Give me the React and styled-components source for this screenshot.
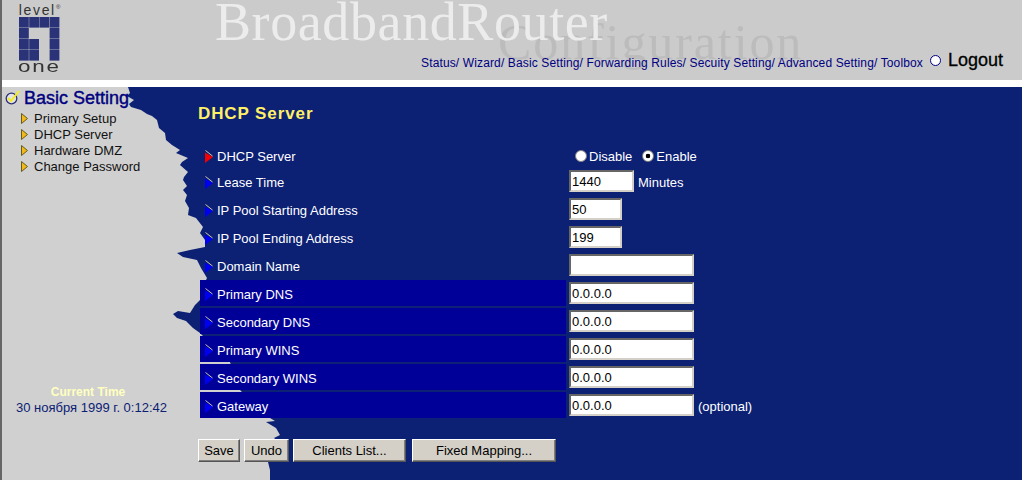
import React from "react";
import styled, { createGlobalStyle } from "styled-components";

const GlobalStyle = createGlobalStyle`
  html, body {
    margin: 0;
    padding: 0;
    height: 480px;
    overflow: hidden;
    background: #fff;
  }
  body {
    font-family: "Liberation Sans", Arial, sans-serif;
  }
`;

const Page = styled.div`
  width: 1020px;
  height: 480px;
  border-left: 2px solid #666;
  display: flex;
  flex-direction: column;
`;

const Header = styled.header`
  position: relative;
  height: 80px;
  background: #cbcbcb;
  display: flex;
  justify-content: space-between;
`;

const Logo = styled.div`
  width: 41px;
  margin-left: 17px;
  padding-top: 3px;
  display: flex;
  flex-direction: column;
  align-items: center;
  color: #333;
`;

const LogoLevel = styled.span`
  font-size: 14px;
  line-height: 14px;
  letter-spacing: 1.7px;
  white-space: nowrap;
  sup {
    font-size: 6px;
    line-height: 0;
    letter-spacing: 0;
  }
`;

const LogoOne = styled.span`
  font-size: 16px;
  line-height: 12px;
  letter-spacing: 1.3px;
  transform: scaleX(1.4);
  white-space: nowrap;
`;

const Watermark = styled.span`
  position: absolute;
  left: ${({ $left }) => $left}px;
  top: ${({ $top }) => $top}px;
  font-family: "Liberation Serif", serif;
  font-size: ${({ $size }) => $size}px;
  line-height: 42px;
  letter-spacing: ${({ $spacing }) => $spacing}px;
  color: ${({ $color }) => $color};
  filter: blur(0.5px);
  white-space: nowrap;
`;

const TopNav = styled.nav`
  position: relative;
  display: flex;
  align-items: center;
  height: 24px;
  margin-top: 48px;
  margin-right: 19px;
`;

const NavLinks = styled.span`
  font-size: 12px;
  letter-spacing: 0.13px;
  color: #000080;
  margin-right: 7px;
  margin-top: 5px;
  white-space: nowrap;
`;

const LogoutDot = styled.span`
  width: 9px;
  height: 9px;
  border-radius: 50%;
  background: #fff;
  border: 1.5px solid #000080;
  margin-right: 7px;
`;

const Logout = styled.span`
  font-size: 18px;
  color: #000;
  -webkit-text-stroke: 0.3px #000;
`;

const Main = styled.main`
  position: relative;
  margin-top: 7px;
  height: 393px;
  background: #0c2074;
  display: flex;
  overflow: hidden;
`;

const TornEdge = styled.svg`
  position: absolute;
  left: 0;
  top: 0;
`;

const Sidebar = styled.aside`
  position: relative;
  width: 196px;
  flex: none;
  display: flex;
  flex-direction: column;
`;

const SideHeading = styled.div`
  display: flex;
  align-items: center;
  height: 22px;
  padding-left: 3px;
  font-size: 18px;
  color: #000080;
  gap: 3px;
  -webkit-text-stroke: 0.4px #000080;
`;

const SideList = styled.ul`
  list-style: none;
  margin: 1px 0 0;
  padding: 0 0 0 19px;
`;

const SideItem = styled.li`
  display: flex;
  align-items: center;
  height: 16px;
  gap: 6px;
  font-size: 13px;
  color: #111;
  white-space: nowrap;
`;

const Clock = styled.div`
  margin-top: 210px;
  width: 172px;
  font-size: 13px;
  line-height: 16px;
`;

const ClockTitle = styled.div`
  font-size: 12px;
  font-weight: bold;
  text-align: center;
  color: #ffffc0;
`;

const ClockValue = styled.div`
  padding-left: 14px;
  color: #0c2074;
  white-space: nowrap;
`;

const Content = styled.section`
  position: relative;
  flex: 1;
`;

const Title = styled.h1`
  margin: 17px 0 20px;
  font-size: 17px;
  line-height: 20px;
  font-weight: bold;
  letter-spacing: 0.9px;
  color: #fff066;
`;

const Form = styled.div`
  margin-left: 2px;
  display: flex;
  flex-direction: column;
  gap: 2px;
`;

const Row = styled.div`
  display: flex;
  height: ${({ $height }) => $height || 26}px;
`;

const Label = styled.div`
  width: 366px;
  flex: none;
  display: flex;
  align-items: center;
  gap: 4px;
  padding-left: 5px;
  box-sizing: border-box;
  padding-top: 3px;
  background: ${({ $shaded }) => ($shaded ? "#000098" : "transparent")};
  font-size: 13px;
  color: #fff;
  white-space: nowrap;
`;

const Value = styled.div`
  margin-left: 3px;
  display: flex;
  align-items: center;
  color: #fff;
  font-size: 13px;
`;

const TextInput = styled.input`
  width: ${({ $width }) => $width}px;
  height: 22px;
  box-sizing: border-box;
  padding: 0 1px;
  border: 2px solid;
  border-color: #666 #d4d0c8 #d4d0c8 #666;
  background: #fff;
  color: #000;
  font-family: "Liberation Sans", Arial, sans-serif;
  font-size: 13px;
  outline: none;
`;

const Hint = styled.span`
  margin-left: 4px;
  margin-top: 3px;
`;

const RadioGroup = styled.div`
  display: flex;
  align-items: center;
  padding-left: 6px;
  padding-top: 2px;
`;

const Radio = styled.input.attrs({ type: "radio" })`
  appearance: none;
  width: 12px;
  height: 12px;
  margin: 0 2px 0 ${({ $gap }) => $gap || 0}px;
  border-radius: 50%;
  border: 1px solid #808080;
  box-sizing: border-box;
  background: ${({ checked }) =>
    checked ? "radial-gradient(circle, #000 2px, #fff 2.6px)" : "#fff"};
`;

const Buttons = styled.div`
  margin-top: 21px;
  display: flex;
`;

const Button = styled.button`
  width: ${({ $width }) => $width}px;
  height: 23px;
  margin-right: ${({ $after }) => $after}px;
  padding: 0;
  box-sizing: border-box;
  border: 1px solid;
  border-color: #fff #555 #555 #fff;
  box-shadow: inset -1px -1px 0 #808080;
  background: #d4d0c8;
  color: #000;
  font-family: "Liberation Sans", Arial, sans-serif;
  font-size: 13px;
`;

const edge = [
  [0, 87], [128, 87], [130, 93], [127, 96], [134, 100], [129, 104], [131, 107],
  [141, 110], [147, 114], [152, 116], [157, 120], [159, 128], [165, 133],
  [166, 140], [172, 145], [180, 150], [176, 153], [188, 158], [182, 162],
  [180, 165], [188, 172], [184, 177], [183, 180], [187, 186], [183, 190],
  [187, 195], [185, 201], [189, 208], [188, 215], [196, 218], [203, 227],
  [200, 233], [205, 240], [205, 247], [190, 250], [177, 253], [183, 257],
  [197, 260], [201, 268], [207, 278], [203, 286], [200, 300], [195, 305],
  [190, 313], [178, 311], [173, 314], [177, 318], [186, 321], [193, 328],
  [200, 333], [215, 348], [230, 362], [234, 376], [240, 390], [255, 405],
  [270, 418], [275, 421], [266, 422], [276, 428], [280, 435], [274, 438],
  [281, 444], [276, 455], [268, 462], [270, 470], [270, 480], [0, 480],
];

const navItems = ["Primary Setup", "DHCP Server", "Hardware DMZ", "Change Password"];

const rows = [
  { label: "Lease Time", width: 65, value: "1440", hint: "Minutes" },
  { label: "IP Pool Starting Address", width: 53, value: "50" },
  { label: "IP Pool Ending Address", width: 53, value: "199" },
  { label: "Domain Name", width: 125, value: "" },
  { label: "Primary DNS", width: 125, value: "0.0.0.0", shaded: true },
  { label: "Secondary DNS", width: 125, value: "0.0.0.0", shaded: true },
  { label: "Primary WINS", width: 125, value: "0.0.0.0", shaded: true },
  { label: "Secondary WINS", width: 125, value: "0.0.0.0", shaded: true },
  { label: "Gateway", width: 125, value: "0.0.0.0", shaded: true, hint: "(optional)" },
];

function Marker({ color = "#0000f0" }) {
  return (
    <svg width="8" height="13" viewBox="0 0 8 13">
      <path d="M0 2.5 L8 7 L0 13 Z" fill={color} />
      <path d="M0.5 0.5 L7.5 6" stroke="#c8c8b0" strokeWidth="1" fill="none" />
    </svg>
  );
}

function SideArrow() {
  return (
    <svg width="7" height="11" viewBox="0 0 7 11">
      <path d="M0.5 0.5 L6.5 5.5 L0.5 10.5 Z" fill="#f0b818" stroke="#6a5a20" strokeWidth="1" />
    </svg>
  );
}

function CheckMark() {
  return (
    <svg width="16" height="16" viewBox="0 0 16 16">
      <circle cx="6.5" cy="8.5" r="5.3" fill="#e4e4e4" stroke="#303078" strokeWidth="1.3" />
      <path d="M3 8 L6 11 L14 1" stroke="#f4ee20" strokeWidth="2" fill="none" />
    </svg>
  );
}

function LogoMark() {
  const cells = [
    [0, 0], [1, 0], [2, 0], [3, 0],
    [0, 1], [3, 1],
    [0, 2], [1, 2], [3, 2],
    [0, 3], [1, 3], [3, 3],
  ];
  return (
    <svg width="41" height="44" viewBox="0 0 41 44">
      {cells.map(([x, y]) => (
        <rect key={`${x}-${y}`} x={x * 10.2} y={y * 11} width="9.8" height="10.6" fill="#2a3378" />
      ))}
    </svg>
  );
}

export default function App() {
  return (
    <>
      <GlobalStyle />
      <Page>
        <Header>
          <Logo>
            <LogoLevel>level<sup>®</sup></LogoLevel>
            <LogoMark />
            <LogoOne>one</LogoOne>
          </Logo>
          <Watermark $left={496} $top={21} $size={50} $spacing={1.9} $color="#bcbcbc">Configuration</Watermark>
          <Watermark $left={213} $top={1} $size={54} $spacing={0.6} $color="#ececec">BroadbandRouter</Watermark>
          <TopNav>
            <NavLinks>Status/ Wizard/ Basic Setting/ Forwarding Rules/ Secuity Setting/ Advanced Setting/ Toolbox</NavLinks>
            <LogoutDot />
            <Logout>Logout</Logout>
          </TopNav>
        </Header>
        <Main>
          <TornEdge width="1020" height="393" viewBox="2 87 1020 393">
            <polygon points={edge.map((p) => p.join(",")).join(" ")} fill="#d0d0d0" />
          </TornEdge>
          <Sidebar>
            <SideHeading>
              <CheckMark />
              Basic Setting
            </SideHeading>
            <SideList>
              {navItems.map((item) => (
                <SideItem key={item}>
                  <SideArrow />
                  {item}
                </SideItem>
              ))}
            </SideList>
            <Clock>
              <ClockTitle>Current Time</ClockTitle>
              <ClockValue>30 ноября 1999 г. 0:12:42</ClockValue>
            </Clock>
          </Sidebar>
          <Content>
            <Title>DHCP Server</Title>
            <Form>
              <Row $height={22}>
                <Label>
                  <Marker color="#f00000" />
                  DHCP Server
                </Label>
                <Value>
                  <RadioGroup>
                    <Radio name="dhcp" readOnly />
                    Disable
                    <Radio name="dhcp" checked readOnly $gap={10} />
                    Enable
                  </RadioGroup>
                </Value>
              </Row>
              {rows.map((row) => (
                <Row key={row.label}>
                  <Label $shaded={row.shaded}>
                    <Marker />
                    {row.label}
                  </Label>
                  <Value>
                    <TextInput $width={row.width} defaultValue={row.value} />
                    {row.hint && <Hint>{row.hint}</Hint>}
                  </Value>
                </Row>
              ))}
            </Form>
            <Buttons>
              <Button $width={42} $after={4}>Save</Button>
              <Button $width={45} $after={4}>Undo</Button>
              <Button $width={113} $after={6}>Clients List...</Button>
              <Button $width={144} $after={0}>Fixed Mapping...</Button>
            </Buttons>
          </Content>
        </Main>
      </Page>
    </>
  );
}
